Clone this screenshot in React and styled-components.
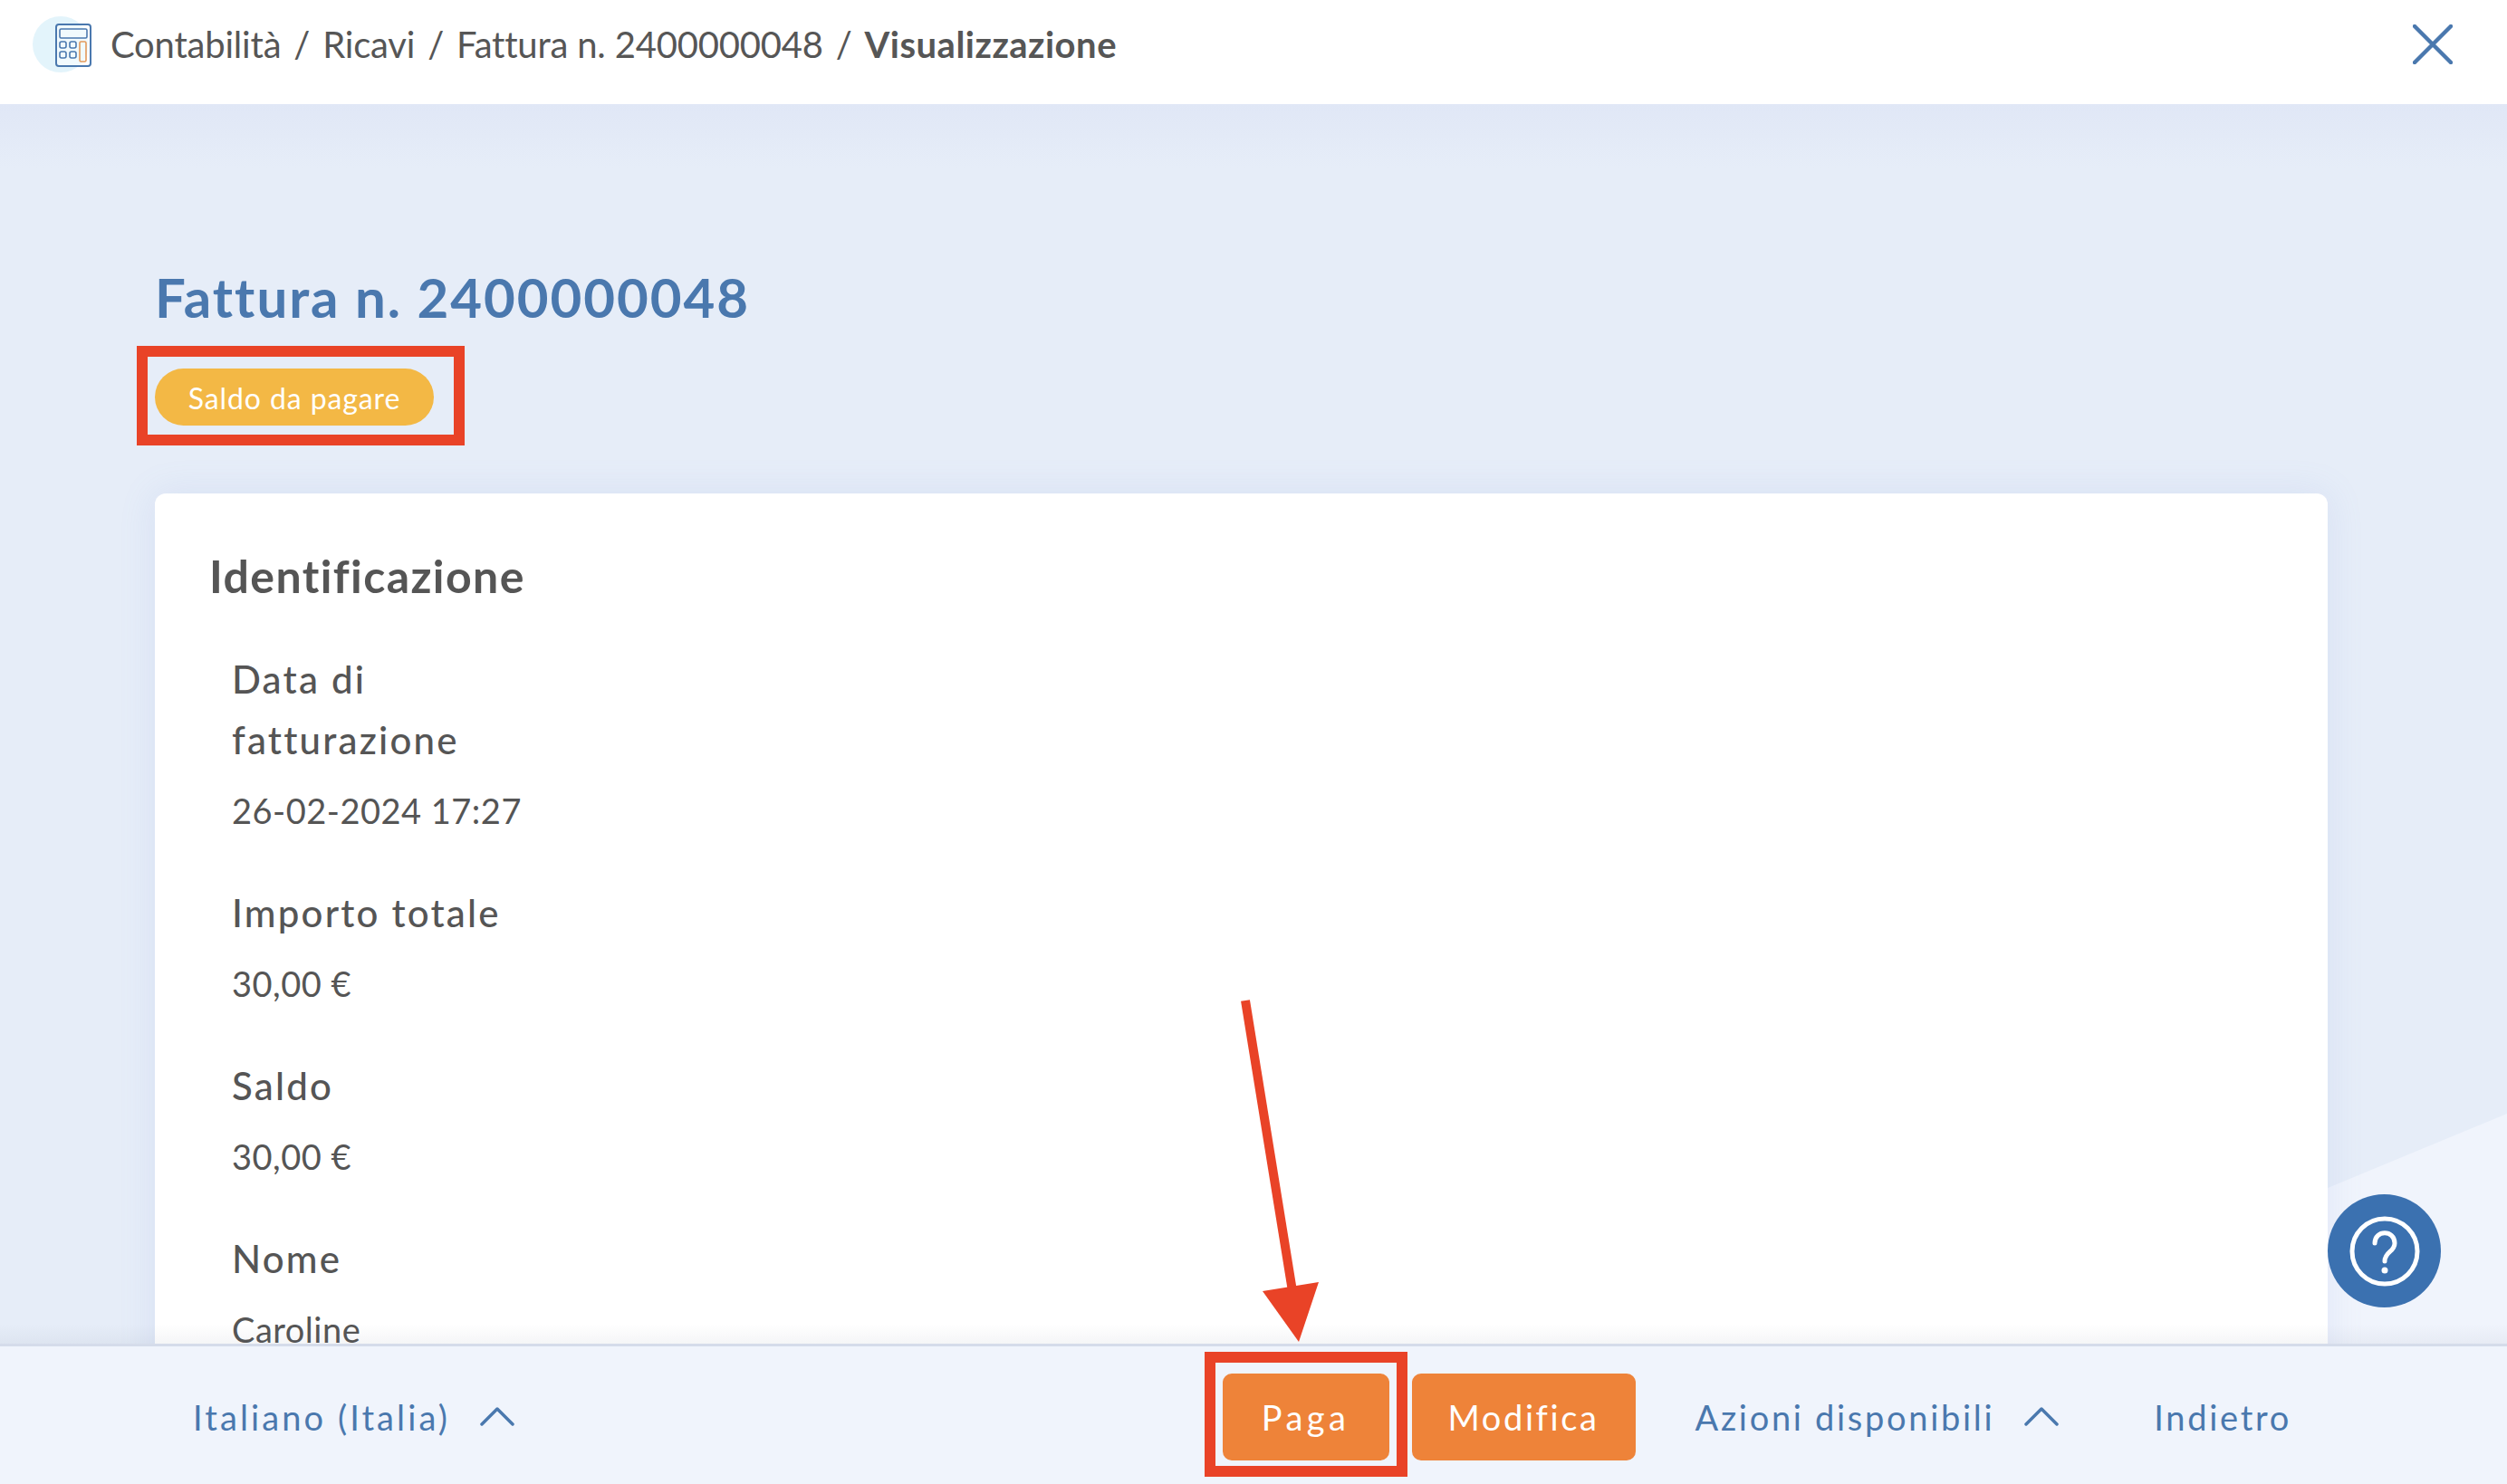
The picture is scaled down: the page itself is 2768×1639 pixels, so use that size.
import React from 'react';
import styled, { createGlobalStyle } from 'styled-components';

const GlobalStyle = createGlobalStyle`
  html, body {
    margin: 0;
    padding: 0;
    height: 100%;
    overflow: hidden;
    font-family: Lato, "Open Sans", sans-serif;
  }
`;

const Page = styled.div`
  position: relative;
  display: flex;
  flex-direction: column;
  width: 2768px;
  height: 1639px;
  overflow: hidden;
  background: #e6edf8;
`;

const Header = styled.header`
  display: flex;
  align-items: center;
  flex: 0 0 115px;
  padding: 0 60px 18px 36px;
  box-sizing: border-box;
  background: #fff;
  z-index: 2;
`;

const Breadcrumb = styled.nav`
  display: flex;
  align-items: center;
  margin-left: 20px;
  font-size: 40px;
  letter-spacing: -0.2px;
  color: #565656;
`;

const Separator = styled.span`
  margin: 0 14px;
`;

const Current = styled.span`
  font-weight: 700;
  letter-spacing: 0.5px;
`;

const CloseButton = styled.button`
  display: flex;
  margin-left: auto;
  padding: 0;
  border: 0;
  background: none;
`;

const Main = styled.main`
  position: relative;
  flex: 1;
  min-height: 0;
  overflow: hidden;
  padding: 178px 198px 0 171px;
  background: linear-gradient(#e0e7f6, #e6edf8 70px);

  &::before {
    content: '';
    position: absolute;
    inset: 0;
    background: #f0f4fc;
    clip-path: polygon(100% 1115px, 100% 100%, 0 100%, 0 2261px);
  }

  &::after {
    content: '';
    position: absolute;
    left: 0;
    right: 0;
    bottom: 0;
    height: 22px;
    background: linear-gradient(transparent, rgba(60, 70, 100, 0.05));
  }
`;

const Title = styled.h1`
  position: relative;
  margin: 0 0 44px;
  font-size: 60px;
  line-height: 70px;
  font-weight: 700;
  letter-spacing: 1.95px;
  color: #4a78ae;
`;

const PillWrap = styled.div`
  position: relative;
  width: max-content;
  margin-bottom: 75px;
`;

const Pill = styled.span`
  display: flex;
  align-items: center;
  justify-content: center;
  box-sizing: border-box;
  width: 308px;
  height: 63px;
  padding-top: 2px;
  border-radius: 32px;
  background: #f3b845;
  font-size: 32px;
  letter-spacing: 0.9px;
  color: #fff;
`;

const Highlight = styled.span`
  position: absolute;
  top: ${({ $top }) => $top}px;
  right: ${({ $right }) => $right}px;
  bottom: ${({ $bottom }) => $bottom}px;
  left: ${({ $left }) => $left}px;
  border: 12px solid #e94327;
`;

const Card = styled.section`
  position: relative;
  padding: 61px 60px 0;
  height: 1200px;
  border-radius: 12px;
  background: #fff;
  box-shadow: 0 0 40px rgba(120, 150, 220, 0.14);
`;

const CardTitle = styled.h2`
  margin: 0 0 51px;
  font-size: 50px;
  line-height: 60px;
  font-weight: 700;
  letter-spacing: 1.4px;
  color: #555;
`;

const Field = styled.div`
  margin: 0 0 55px 25px;
`;

const Label = styled.div`
  width: 340px;
  font-size: 42px;
  line-height: 67px;
  font-weight: 500;
  letter-spacing: 2.2px;
  color: #555;
`;

const Value = styled.div`
  margin-top: 19px;
  font-size: 38px;
  line-height: 50px;
  letter-spacing: 0.5px;
  color: #555;
`;

const Footer = styled.footer`
  position: relative;
  display: flex;
  align-items: center;
  flex: 0 0 155px;
  box-sizing: border-box;
  padding: 3px 238px 0 213px;
  border-top: 3px solid #d5dcea;
  background: #f0f4fc;
  z-index: 2;
`;

const FooterLink = styled.span`
  display: flex;
  align-items: center;
  gap: 33px;
  font-size: 38px;
  letter-spacing: ${({ $spacing }) => $spacing}px;
  color: #4a78ae;
`;

const FooterActions = styled.div`
  display: flex;
  align-items: center;
  margin-left: auto;
`;

const PayWrap = styled.div`
  position: relative;
  margin-right: 25px;
`;

const ActionButton = styled.button`
  display: block;
  width: ${({ $width }) => $width}px;
  height: 96px;
  margin-right: ${({ $gap }) => $gap || 0}px;
  padding: 0;
  border: 0;
  border-radius: 10px;
  background: #ee8339;
  font-family: inherit;
  font-size: 38px;
  letter-spacing: ${({ $spacing }) => $spacing}px;
  color: #fff;
`;

const Spacer = styled.span`
  width: ${({ $width }) => $width}px;
`;

const HelpButton = styled.button`
  position: absolute;
  left: 2570px;
  top: 1319px;
  display: flex;
  align-items: center;
  justify-content: center;
  width: 125px;
  height: 125px;
  padding: 0;
  border: 0;
  border-radius: 50%;
  background: #3b71b0;
  z-index: 3;
`;

const Arrow = styled.svg`
  position: absolute;
  left: 1360px;
  top: 1100px;
  z-index: 4;
`;

const CalculatorIcon = () => (
  <svg width="66" height="62" viewBox="0 0 66 62" fill="none">
    <circle cx="31" cy="31" r="31" fill="#e3f4fb" />
    <rect x="26" y="9" width="38" height="46" rx="3" fill="#fff" fillOpacity="0.5" stroke="#4a78ae" strokeWidth="2" />
    <rect x="30" y="14" width="30" height="10" rx="1.5" stroke="#4a78ae" strokeWidth="1.6" />
    <rect x="30" y="28" width="7" height="7" rx="2" stroke="#4a78ae" strokeWidth="1.6" />
    <rect x="41" y="28" width="7" height="7" rx="2" stroke="#4a78ae" strokeWidth="1.6" />
    <rect x="30" y="39" width="7" height="7" rx="2" stroke="#4a78ae" strokeWidth="1.6" />
    <rect x="41" y="39" width="7" height="7" rx="2" stroke="#4a78ae" strokeWidth="1.6" />
    <rect x="52" y="28" width="7" height="22" rx="1.5" stroke="#e39a5b" strokeWidth="1.6" />
  </svg>
);

const CloseIcon = () => (
  <svg width="44" height="44" viewBox="0 0 44 44" fill="none" stroke="#4a78ae" strokeWidth="4.5" strokeLinecap="round">
    <path d="M2 2 L42 42 M42 2 L2 42" />
  </svg>
);

const ChevronUp = () => (
  <svg width="38" height="21" viewBox="0 0 38 21" fill="none" stroke="#4a78ae" strokeWidth="3.5" strokeLinecap="round" strokeLinejoin="round">
    <path d="M2 19 L19 2 L36 19" />
  </svg>
);

const HelpIcon = () => (
  <svg width="78" height="78" viewBox="0 0 78 78" fill="none" stroke="#fff" strokeWidth="5">
    <circle cx="39" cy="39" r="36" />
    <path d="M28 30 C28 15 50 15 50 30 C50 40 39 39 39 50" strokeLinecap="round" />
    <circle cx="39" cy="60" r="3.5" fill="#fff" stroke="none" />
  </svg>
);

const fields = [
  { label: 'Data di fatturazione', value: '26-02-2024 17:27' },
  { label: 'Importo totale', value: '30,00 €' },
  { label: 'Saldo', value: '30,00 €' },
  { label: 'Nome', value: 'Caroline' }
];

const crumbs = ['Contabilità', 'Ricavi', 'Fattura n. 2400000048'];

const App = () => (
  <Page>
    <GlobalStyle />
    <Header>
      <CalculatorIcon />
      <Breadcrumb>
        {crumbs.map((crumb) => (
          <React.Fragment key={crumb}>
            <span>{crumb}</span>
            <Separator>/</Separator>
          </React.Fragment>
        ))}
        <Current>Visualizzazione</Current>
      </Breadcrumb>
      <CloseButton aria-label="Chiudi">
        <CloseIcon />
      </CloseButton>
    </Header>
    <Main>
      <Title>Fattura n. 2400000048</Title>
      <PillWrap>
        <Pill>Saldo da pagare</Pill>
        <Highlight $top={-25} $right={-34} $bottom={-22} $left={-20} />
      </PillWrap>
      <Card>
        <CardTitle>Identificazione</CardTitle>
        {fields.map((field) => (
          <Field key={field.label}>
            <Label>{field.label}</Label>
            <Value>{field.value}</Value>
          </Field>
        ))}
      </Card>
    </Main>
    <Footer>
      <FooterLink $spacing={3.1}>
        Italiano (Italia)
        <ChevronUp />
      </FooterLink>
      <FooterActions>
        <PayWrap>
          <ActionButton $width={184} $spacing={4.5}>Paga</ActionButton>
          <Highlight $top={-24} $right={-20} $bottom={-18} $left={-20} />
        </PayWrap>
        <ActionButton $width={247} $gap={66} $spacing={2.6}>Modifica</ActionButton>
        <FooterLink $spacing={2.7}>
          Azioni disponibili
          <ChevronUp />
        </FooterLink>
        <Spacer $width={105} />
        <FooterLink $spacing={2.7}>Indietro</FooterLink>
      </FooterActions>
    </Footer>
    <HelpButton aria-label="Aiuto">
      <HelpIcon />
    </HelpButton>
    <Arrow width="110" height="390" viewBox="0 0 110 390">
      <path d="M15 5 L67 326" stroke="#e94327" strokeWidth="10" />
      <path d="M34 326 L96 316 L74 382 Z" fill="#e94327" />
    </Arrow>
  </Page>
);

export default App;
